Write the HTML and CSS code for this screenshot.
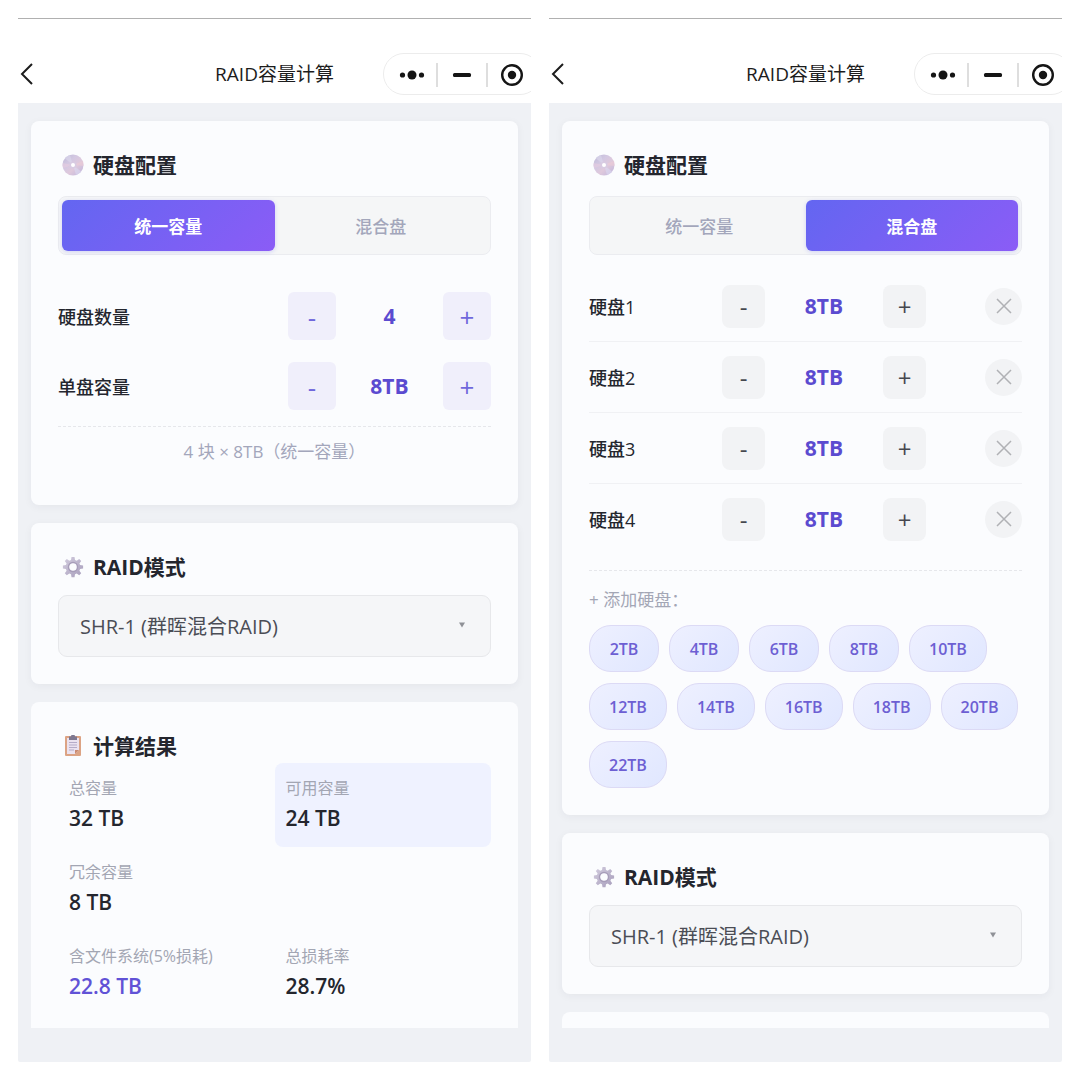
FILE: index.html
```html
<!DOCTYPE html>
<html lang="zh-CN">
<head>
<meta charset="utf-8">
<meta name="viewport" content="width=device-width, initial-scale=1">
<title>RAID容量计算</title>
<link rel="stylesheet" href="styles.css">
</head>
<body>
<svg class="sprite" aria-hidden="true">
  <defs>
    <linearGradient id="disc-fill" x1="0" y1="0" x2="1" y2="1">
      <stop offset="0" stop-color="#bdb9d6"/>
      <stop offset=".35" stop-color="#d3c8e2"/>
      <stop offset=".6" stop-color="#dfc9dc"/>
      <stop offset="1" stop-color="#bcb4dc"/>
    </linearGradient>
    <linearGradient id="gear-fill" x1="0" y1="0" x2="1" y2="1">
      <stop offset="0" stop-color="#d3cddf"/>
      <stop offset="1" stop-color="#a79dbb"/>
    </linearGradient>
    <symbol id="icon-disc" viewBox="0 0 22 22">
      <circle cx="11" cy="11" r="10.5" fill="url(#disc-fill)"/>
      <path d="M11 11 3 4.500A10.500 10.500 0 0 1 8 1z" fill="#dcd9ec" opacity=".6"/>
      <path d="M11 11 19 17.500A10.500 10.500 0 0 1 14 21z" fill="#dcdaf2" opacity=".6"/>
      <path d="M11 11 21 7A10.500 10.500 0 0 1 21.500 12z" fill="#ecccd6" opacity=".6"/>
      <path d="M11 11 1 14A10.500 10.500 0 0 1 .6 9z" fill="#e6cbe0" opacity=".6"/>
      <circle cx="11" cy="11" r="3.600" fill="#d8cbe2"/>
      <circle cx="11" cy="11" r="2" fill="#fff"/>
    </symbol>
    <symbol id="icon-gear" viewBox="0 0 22 22">
      <g fill="url(#gear-fill)">
        <path fill-rule="evenodd" d="M9.500 1h3l.5 3 1.700.7 2.500-1.800 2 2-1.800 2.500.7 1.700 3 .5v3l-3 .5-.7 1.700 1.800 2.500-2 2-2.500-1.800-1.700.7-.5 3h-3l-.5-3-1.700-.7-2.500 1.800-2-2 1.800-2.500-.7-1.700-3-.5v-3l3-.5.7-1.700-1.800-2.500 2-2 2.500 1.800 1.700-.7zM11 7.200a3.800 3.800 0 1 0 0 7.600 3.800 3.800 0 0 0 0-7.600z"/>
      </g>
      <circle cx="11" cy="11" r="4.600" fill="none" stroke="#a79db9" stroke-width="1.200"/>
    </symbol>
    <symbol id="icon-clipboard" viewBox="0 0 22 22">
      <rect x="3" y="1" width="16" height="20" rx="1" fill="#dca384"/>
      <path d="M5 3h12v12l-4 4H5z" fill="#ebe2ef"/>
      <path d="M13 19v-4h4z" fill="#c98a72"/>
      <path d="M7 7.500h8M7 10h8M7 12.500h8M7 15h5" stroke="#b5abc8" stroke-width="1"/>
      <path d="M7 1.500h2a2 2 0 0 1 4 0h2V5H7z" fill="#7d7790"/>
    </symbol>
    <symbol id="icon-back" viewBox="0 0 16 24">
      <path d="M14 2 4 12l10 10" fill="none" stroke="#1c1c1c" stroke-width="2"/>
    </symbol>
    <symbol id="icon-more" viewBox="0 0 26 12">
      <circle cx="3.500" cy="6" r="2.600" fill="#151515"/>
      <circle cx="13" cy="6" r="4.500" fill="#151515"/>
      <circle cx="22.500" cy="6" r="2.600" fill="#151515"/>
    </symbol>
    <symbol id="icon-minimize" viewBox="0 0 20 6">
      <rect x="1" y="1" width="18" height="4" rx="1.500" fill="#151515"/>
    </symbol>
    <symbol id="icon-exit" viewBox="0 0 24 24">
      <circle cx="12" cy="12" r="9.800" fill="none" stroke="#151515" stroke-width="2.400"/>
      <circle cx="12" cy="12" r="4.200" fill="#151515"/>
    </symbol>
    <symbol id="icon-close" viewBox="0 0 16 16">
      <path d="M1 1l14 14M15 1L1 15" fill="none" stroke="#b0b1b5" stroke-width="1.500"/>
    </symbol>
    <symbol id="icon-caret" viewBox="0 0 8 6">
      <path d="M1 .5h6L4 5.500z" fill="#8f9197"/>
    </symbol>
  </defs>
</svg>

<main class="board">
  <section class="phone" aria-label="统一容量">
    <header class="navbar">
      <button class="navbar__back" type="button" aria-label="返回"><svg width="16" height="24"><use href="#icon-back"/></svg></button>
      <h1 class="navbar__title">RAID容量计算</h1>
      <div class="capsule">
        <button type="button" aria-label="更多"><svg width="26" height="12"><use href="#icon-more"/></svg></button>
        <button type="button" aria-label="最小化"><svg width="20" height="6"><use href="#icon-minimize"/></svg></button>
        <button type="button" aria-label="关闭"><svg width="24" height="24"><use href="#icon-exit"/></svg></button>
      </div>
    </header>
    <div class="content">
      <section class="card">
        <h2 class="card__title"><svg width="22" height="22" aria-hidden="true"><use href="#icon-disc"/></svg>硬盘配置</h2>
        <div class="tabs">
          <button class="tab tab--active" type="button">统一容量</button>
          <button class="tab" type="button">混合盘</button>
        </div>
        <div class="settings">
          <div class="setting">
            <label for="disk-count">硬盘数量</label>
            <div class="stepper">
              <button class="step" type="button" aria-label="减少数量">-</button>
              <output class="value" id="disk-count">4</output>
              <button class="step" type="button" aria-label="增加数量">+</button>
            </div>
          </div>
          <div class="setting">
            <label for="disk-size">单盘容量</label>
            <div class="stepper">
              <button class="step" type="button" aria-label="减少容量">-</button>
              <output class="value" id="disk-size">8TB</output>
              <button class="step" type="button" aria-label="增加容量">+</button>
            </div>
          </div>
        </div>
        <p class="summary">4 块 × 8TB（统一容量）</p>
      </section>

      <section class="card">
        <h2 class="card__title"><svg width="22" height="22" aria-hidden="true"><use href="#icon-gear"/></svg><label for="mode-a">RAID模式</label></h2>
        <div class="picker">
          <select id="mode-a"><option>SHR-1 (群晖混合RAID)</option></select>
          <svg class="picker__caret" width="8" height="6" aria-hidden="true"><use href="#icon-caret"/></svg>
        </div>
      </section>

      <section class="card card--last">
        <h2 class="card__title"><svg width="22" height="22" aria-hidden="true"><use href="#icon-clipboard"/></svg>计算结果</h2>
        <dl class="results">
          <div class="result"><dt>总容量</dt><dd>32 TB</dd></div>
          <div class="result result--highlight"><dt>可用容量</dt><dd>24 TB</dd></div>
          <div class="result"><dt>冗余容量</dt><dd>8 TB</dd></div>
          <div class="result result--newline"><dt>含文件系统(5%损耗)</dt><dd class="accent">22.8 TB</dd></div>
          <div class="result"><dt>总损耗率</dt><dd>28.7%</dd></div>
        </dl>
      </section>
    </div>
  </section>

  <section class="phone" aria-label="混合盘">
    <header class="navbar">
      <button class="navbar__back" type="button" aria-label="返回"><svg width="16" height="24"><use href="#icon-back"/></svg></button>
      <h1 class="navbar__title">RAID容量计算</h1>
      <div class="capsule">
        <button type="button" aria-label="更多"><svg width="26" height="12"><use href="#icon-more"/></svg></button>
        <button type="button" aria-label="最小化"><svg width="20" height="6"><use href="#icon-minimize"/></svg></button>
        <button type="button" aria-label="关闭"><svg width="24" height="24"><use href="#icon-exit"/></svg></button>
      </div>
    </header>
    <div class="content">
      <section class="card">
        <h2 class="card__title"><svg width="22" height="22" aria-hidden="true"><use href="#icon-disc"/></svg>硬盘配置</h2>
        <div class="tabs">
          <button class="tab" type="button">统一容量</button>
          <button class="tab tab--active" type="button">混合盘</button>
        </div>
        <ul class="disks">
          <li class="disk">
            <label for="disk-1">硬盘1</label>
            <div class="stepper">
              <button class="step step--small" type="button" aria-label="减少">-</button>
              <output class="value" id="disk-1">8TB</output>
              <button class="step step--small" type="button" aria-label="增加">+</button>
            </div>
            <button class="remove" type="button" aria-label="移除硬盘1"><svg width="16" height="16"><use href="#icon-close"/></svg></button>
          </li>
          <li class="disk">
            <label for="disk-2">硬盘2</label>
            <div class="stepper">
              <button class="step step--small" type="button" aria-label="减少">-</button>
              <output class="value" id="disk-2">8TB</output>
              <button class="step step--small" type="button" aria-label="增加">+</button>
            </div>
            <button class="remove" type="button" aria-label="移除硬盘2"><svg width="16" height="16"><use href="#icon-close"/></svg></button>
          </li>
          <li class="disk">
            <label for="disk-3">硬盘3</label>
            <div class="stepper">
              <button class="step step--small" type="button" aria-label="减少">-</button>
              <output class="value" id="disk-3">8TB</output>
              <button class="step step--small" type="button" aria-label="增加">+</button>
            </div>
            <button class="remove" type="button" aria-label="移除硬盘3"><svg width="16" height="16"><use href="#icon-close"/></svg></button>
          </li>
          <li class="disk">
            <label for="disk-4">硬盘4</label>
            <div class="stepper">
              <button class="step step--small" type="button" aria-label="减少">-</button>
              <output class="value" id="disk-4">8TB</output>
              <button class="step step--small" type="button" aria-label="增加">+</button>
            </div>
            <button class="remove" type="button" aria-label="移除硬盘4"><svg width="16" height="16"><use href="#icon-close"/></svg></button>
          </li>
        </ul>
        <div class="add">
          <p class="add__label">+ 添加硬盘：</p>
          <div class="chips">
            <button class="chip" type="button">2TB</button>
            <button class="chip" type="button">4TB</button>
            <button class="chip" type="button">6TB</button>
            <button class="chip" type="button">8TB</button>
            <button class="chip" type="button">10TB</button>
            <button class="chip" type="button">12TB</button>
            <button class="chip" type="button">14TB</button>
            <button class="chip" type="button">16TB</button>
            <button class="chip" type="button">18TB</button>
            <button class="chip" type="button">20TB</button>
            <button class="chip" type="button">22TB</button>
          </div>
        </div>
      </section>

      <section class="card">
        <h2 class="card__title"><svg width="22" height="22" aria-hidden="true"><use href="#icon-gear"/></svg><label for="mode-b">RAID模式</label></h2>
        <div class="picker">
          <select id="mode-b"><option>SHR-1 (群晖混合RAID)</option></select>
          <svg class="picker__caret" width="8" height="6" aria-hidden="true"><use href="#icon-caret"/></svg>
        </div>
      </section>

      <section class="card card--last card--peek"></section>
    </div>
  </section>
</main>
</body>
</html>
```
FILE: styles.css
```css
*,
*::before,
*::after {
  box-sizing: border-box;
}

body {
  margin: 0;
  background: #fff;
  color: #24262e;
  font-family: "Open Sans", "Noto Sans CJK SC", sans-serif;
  font-size: 18px;
}

h1,
h2,
p,
ul,
dl,
dd {
  margin: 0;
  padding: 0;
}

button,
select {
  margin: 0;
  padding: 0;
  border: 0;
  background: none;
  color: inherit;
  font: inherit;
}

svg {
  display: block;
}

.sprite {
  position: absolute;
  width: 0;
  height: 0;
}

.board {
  display: grid;
  grid-template-columns: 1fr 1fr;
  gap: 18px;
  min-height: 100vh;
  padding: 18px;
}

.phone {
  display: flex;
  flex-direction: column;
  overflow: hidden;
  border-top: 1px solid #b0b0b0;
  border-radius: 0 0 2px 2px;
  background: #eff1f5;
}

/* Navigation bar */

.navbar {
  display: grid;
  grid-template-columns: 1fr auto 1fr;
  align-items: center;
  padding: 34px 0 8px;
  background: #fff;
}

.navbar__back {
  justify-self: start;
}

.navbar__title {
  color: #1c1c1c;
  font-size: 19px;
  font-weight: 400;
  line-height: 40px;
}

.capsule {
  display: flex;
  justify-self: end;
  align-items: center;
  height: 42px;
  margin-right: -10px;
  padding: 1px 4px 0;
  border: 1px solid #ececec;
  border-radius: 21px;
}

.capsule button {
  display: flex;
  align-items: center;
  justify-content: center;
  width: 48px;
  height: 24px;
}

.capsule button + button {
  width: 50px;
  border-left: 2px solid #dedede;
}

/* Cards */

.content {
  display: flex;
  flex: 1;
  flex-direction: column;
  gap: 18px;
  padding: 18px 13px 34px;
}

.card {
  padding: 27px;
  border-radius: 8px;
  background: #fbfcfe;
  box-shadow: 0 2px 8px rgba(30, 35, 60, .05);
}

.card--last {
  flex: 1;
  padding-bottom: 12px;
  border-radius: 8px 8px 0 0;
  box-shadow: none;
}

.card--peek {
  padding: 8px;
}

.card__title {
  display: flex;
  align-items: center;
  gap: 9px;
  padding-left: 4px;
  font-size: 21px;
  font-weight: 700;
  line-height: 34px;
}

/* Tabs */

.tabs {
  display: grid;
  grid-template-columns: 1fr 1fr;
  margin-top: 14px;
  padding: 3px;
  border: 1px solid #ebecf0;
  border-radius: 8px;
  background: #f5f6f7;
}

.tab {
  height: 51px;
  border-radius: 6px;
  color: #a3a6bb;
  font-size: 17px;
  font-weight: 500;
}

.tab--active {
  background: linear-gradient(135deg, #6366f1, #8b5cf6);
  box-shadow: 0 1px 4px rgba(99, 102, 241, .25);
  color: #fff;
  font-weight: 700;
}

/* Steppers */

.settings {
  display: grid;
  gap: 22px;
  margin-top: 37px;
}

.setting {
  display: grid;
  grid-template-columns: 1fr 203px;
  align-items: center;
  font-weight: 500;
}

.stepper {
  display: flex;
  align-items: center;
}

.step {
  width: 48px;
  height: 48px;
  padding-top: 3px;
  border-radius: 6px;
  background: #f0effb;
  color: #7068dc;
  font-size: 26px;
  line-height: 45px;
}

.step--small {
  width: 43px;
  height: 43px;
  padding-top: 1px;
  border-radius: 8px;
  background: #f2f3f5;
  color: #45474e;
  font-size: 24px;
  line-height: 42px;
}

.value {
  flex: 1;
  color: #5b4bd0;
  font-size: 21px;
  font-weight: 700;
  text-align: center;
}

.summary {
  margin-top: 16px;
  padding: 12px 0 13px;
  border-top: 1px dashed #e6e7eb;
  color: #a3a6bb;
  font-size: 17px;
  line-height: 26px;
  text-align: center;
}

/* Mixed disks */

.disks {
  margin-top: 16px;
  list-style: none;
}

.disk {
  display: grid;
  grid-template-columns: 1fr 204px 96px;
  align-items: center;
  height: 70px;
  font-weight: 500;
}

.disk + .disk {
  height: 71px;
  border-top: 1px solid #f0f1f4;
}

.remove {
  display: flex;
  align-items: center;
  justify-content: center;
  justify-self: end;
  width: 37px;
  height: 37px;
  border-radius: 50%;
  background: #f2f3f5;
}

.add {
  margin-top: 16px;
  border-top: 1px dashed #e6e7eb;
}

.add__label {
  padding: 16px 0 12px;
  color: #a3a6b5;
  font-size: 17px;
  line-height: 26px;
}

.chips {
  display: flex;
  flex-wrap: wrap;
  gap: 11px 10px;
}

.chip {
  min-width: 70px;
  height: 47px;
  padding: 0 19px;
  border: 1px solid #dcdaf5;
  border-radius: 22px;
  background: linear-gradient(135deg, #eef0ff, #e0e7ff);
  color: #6d5fd3;
  font-size: 16px;
  font-weight: 600;
}

/* Mode picker */

.picker {
  position: relative;
  margin-top: 11px;
}

.picker select {
  width: 100%;
  height: 62px;
  padding: 0 40px 0 21px;
  border: 1px solid #e7e8eb;
  border-radius: 9px;
  background: #f5f6f8;
  color: #4b4d55;
  font-size: 20px;
  appearance: none;
}

.picker__caret {
  position: absolute;
  top: 27px;
  right: 25px;
  pointer-events: none;
}

/* Results */

.results {
  display: grid;
  grid-template-columns: 1fr 1fr;
}

.result {
  padding: 13px 11px 11px;
  border-radius: 8px;
}

.result--highlight {
  background: #eff2ff;
}

.result--newline {
  grid-column-start: 1;
}

.result dt {
  color: #a3a6b3;
  font-size: 16px;
  line-height: 24px;
}

.result dd {
  font-size: 21px;
  font-weight: 600;
  line-height: 36px;
}

.result .accent {
  color: #6152d6;
}
```
